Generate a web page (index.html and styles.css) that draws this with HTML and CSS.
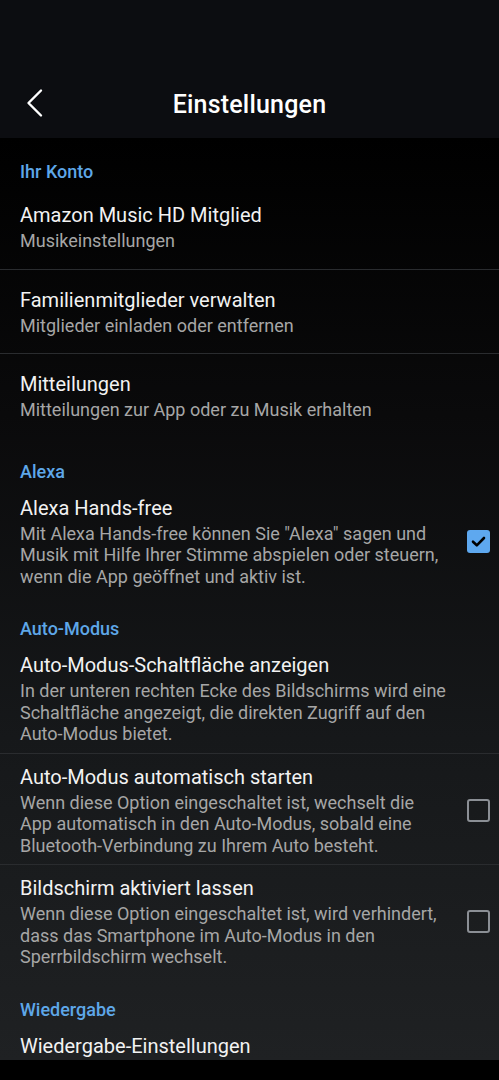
FILE: index.html
```html
<html>
<head>
    <meta charset="utf-8">
    <link rel="stylesheet" href="styles.css">
</head>
<body>

<div class="screen">
  <div class="topbar">
    <svg class="back" width="24" height="30" viewBox="0 0 24 30">
      <path d="M17 2.5 L4.5 15 L17 27.5" fill="none" stroke="#fff" stroke-width="2.4" stroke-linecap="round" stroke-linejoin="round"/>
    </svg>
    <h1 class="title">Einstellungen</h1>
  </div>

  <div class="content">
    <div class="section">Ihr Konto</div>
    <div class="item nav line">
      <div class="text">
        <div class="name">Amazon Music HD Mitglied</div>
        <div class="desc">Musikeinstellungen</div>
      </div>
    </div>
    <div class="item nav line">
      <div class="text">
        <div class="name">Familienmitglieder verwalten</div>
        <div class="desc">Mitglieder einladen oder entfernen</div>
      </div>
    </div>
    <div class="item nav">
      <div class="text">
        <div class="name">Mitteilungen</div>
        <div class="desc">Mitteilungen zur App oder zu Musik erhalten</div>
      </div>
    </div>

    <div class="section">Alexa</div>
    <div class="item">
      <div class="text">
        <div class="name">Alexa Hands-free</div>
        <div class="desc">Mit Alexa Hands-free können Sie "Alexa" sagen und Musik mit Hilfe Ihrer Stimme abspielen oder steuern, wenn die App geöffnet und aktiv ist.</div>
      </div>
      <div class="check on">
        <svg width="23" height="23" viewBox="0 0 23 23"><path d="M6 11.7 L9.8 15.3 L17 8" fill="none" stroke="#000" stroke-width="2.6" stroke-linecap="round" stroke-linejoin="round"/></svg>
      </div>
    </div>

    <div class="section">Auto-Modus</div>
    <div class="item line">
      <div class="text">
        <div class="name">Auto-Modus-Schaltfläche anzeigen</div>
        <div class="desc">In der unteren rechten Ecke des Bildschirms wird eine Schaltfläche angezeigt, die direkten Zugriff auf den Auto-Modus bietet.</div>
      </div>
    </div>
    <div class="item line">
      <div class="text">
        <div class="name">Auto-Modus automatisch starten</div>
        <div class="desc">Wenn diese Option eingeschaltet ist, wechselt die App automatisch in den Auto-Modus, sobald eine Bluetooth-Verbindung zu Ihrem Auto besteht.</div>
      </div>
      <div class="check"></div>
    </div>
    <div class="item">
      <div class="text">
        <div class="name">Bildschirm aktiviert lassen</div>
        <div class="desc">Wenn diese Option eingeschaltet ist, wird verhindert, dass das Smartphone im Auto-Modus in den Sperrbildschirm wechselt.</div>
      </div>
      <div class="check"></div>
    </div>

    <div class="section">Wiedergabe</div>
    <div class="item">
      <div class="text">
        <div class="name">Wiedergabe-Einstellungen</div>
      </div>
    </div>
  </div>

  <div class="navbar"></div>
</div>

</body>
</html>
```

FILE: styles.css
```css
* {
  margin: 0px;
  padding: 0px;
  box-sizing: border-box;
}
body {
  background-color: #000;
  font-family: Roboto, "Noto Sans", sans-serif;
  color: #f2f2f2;
}
.screen {
  display: flex;
  flex-direction: column;
  width: 499px;
  height: 1080px;
  overflow: hidden;
}
.topbar {
  position: relative;
  display: flex;
  justify-content: center;
  align-items: center;
  height: 138px;
  padding-top: 70px;
  background-color: #0c0d11;
}
.back {
  position: absolute;
  left: 24px;
  top: 88px;
}
.title {
  font-size: 25px;
  font-weight: 500;
  color: #fff;
  letter-spacing: 0.2px;
}
.content {
  flex: 1;
  overflow: hidden;
  background: linear-gradient(#000 0%, #0a0a0b 30%, #16181a 65%, #1f2123 100%);
}
.section {
  padding: 23px 20px 2px;
  font-size: 18px;
  line-height: 22px;
  font-weight: 500;
  color: #5ea7e8;
}
.item {
  display: flex;
  align-items: center;
  padding: 11px 9px 8px 20px;
}
.item.nav {
  padding-top: 18px;
  padding-bottom: 17px;
}
.item.line {
  border-bottom: 1px solid #2a2c2f;
}
.text {
  flex: 1;
  padding-right: 22px;
}
.name {
  font-size: 20px;
  line-height: 24px;
  color: #f2f2f2;
}
.desc {
  margin-top: 3px;
  font-size: 18px;
  line-height: 21.5px;
  color: #a6a6a6;
}
.check {
  flex: none;
  width: 23px;
  height: 23px;
  border: 2px solid #8b8f95;
  border-radius: 3px;
}
.check.on {
  border: none;
  background-color: #5ea8ef;
}
.check svg {
  display: block;
}
.navbar {
  height: 20px;
  background-color: #000;
}
```
